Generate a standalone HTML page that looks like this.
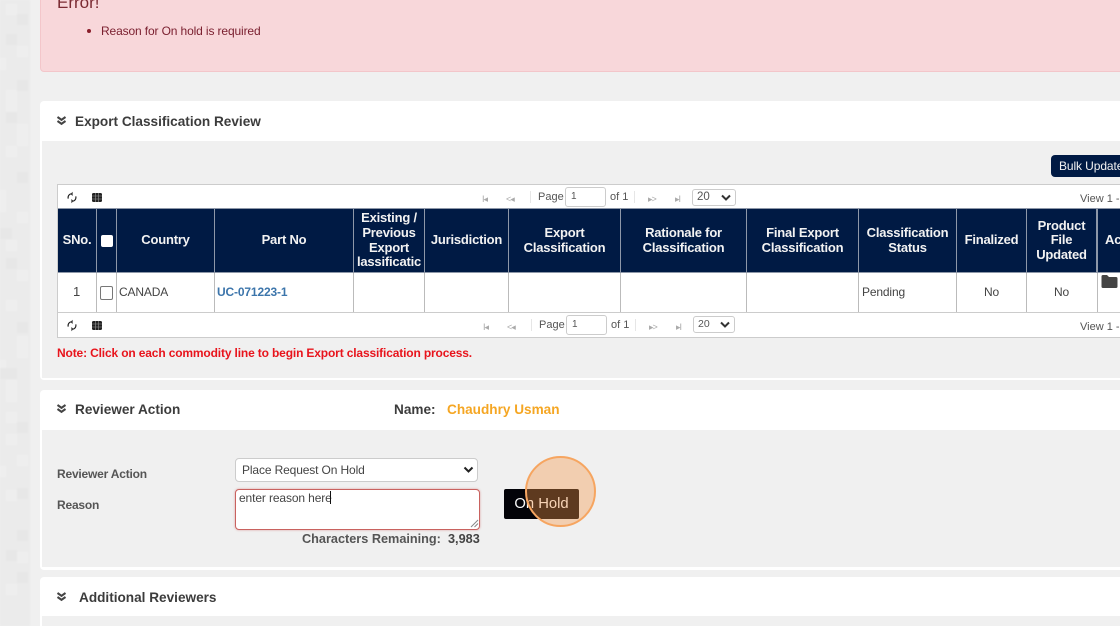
<!DOCTYPE html>
<html>
<head>
<meta charset="utf-8">
<style>
html,body{margin:0;padding:0;width:1120px;height:626px;overflow:hidden;}
#p{width:1120px;height:626px;overflow:hidden;position:relative;background:#f0f0f0;font-family:"Liberation Sans",sans-serif;color:#444;}
.a{position:absolute;white-space:nowrap;}
.box{position:absolute;box-sizing:border-box;}
.title{font-weight:bold;font-size:13.6px;color:#3c3c3c;line-height:16px;}
.th{position:absolute;top:209px;height:63px;display:flex;align-items:center;justify-content:center;text-align:center;color:#f2f2f2;font-weight:bold;font-size:13px;letter-spacing:-.2px;line-height:14.6px;overflow:hidden;box-sizing:border-box;background:#001a44;}
.vl{position:absolute;width:1px;}
.td{position:absolute;font-size:12px;letter-spacing:-.15px;line-height:14px;color:#444;white-space:nowrap;}
.pg{font-size:11px;color:#555;position:absolute;white-space:nowrap;line-height:13px;}
.inp{position:absolute;box-sizing:border-box;height:20px;background:#fff;border:1px solid #ccc;border-radius:3px;font-size:10px;color:#555;padding:3px 0 0 5px;line-height:12px;}
.sel{position:absolute;box-sizing:border-box;height:17px;background:#fff;border:1px solid #ccc;border-radius:3px;font-size:11.5px;color:#555;padding:1px 0 0 4px;line-height:13px;}
.lab{position:absolute;font-weight:bold;font-size:12px;letter-spacing:-.2px;color:#555;line-height:14px;white-space:nowrap;}
</style>
</head>
<body>
<div id="p">
<!-- left mosaic strip -->
<svg class="a" style="left:0;top:0;filter:blur(.8px)" width="30" height="626" xmlns="http://www.w3.org/2000/svg">
<rect x="-3" y="-3" width="33" height="632" fill="#ebebeb"/>
<g fill="#eeeeee"><rect x="6" y="4" width="11" height="11"/><rect x="17" y="46" width="11" height="11"/><rect x="0" y="58" width="6" height="12"/><rect x="6" y="90" width="11" height="22"/><rect x="17" y="124" width="11" height="22"/><rect x="6" y="146" width="11" height="11"/><rect x="0" y="190" width="6" height="22"/><rect x="17" y="212" width="11" height="11"/><rect x="6" y="240" width="11" height="11"/><rect x="17" y="270" width="11" height="11"/><rect x="6" y="300" width="11" height="11"/><rect x="17" y="336" width="11" height="22"/><rect x="0" y="360" width="6" height="8"/><rect x="6" y="380" width="11" height="22"/><rect x="6" y="412" width="11" height="11"/><rect x="6" y="434" width="11" height="11"/><rect x="17" y="455" width="11" height="11"/><rect x="0" y="466" width="6" height="11"/><rect x="6" y="490" width="11" height="11"/><rect x="17" y="552" width="11" height="11"/><rect x="6" y="584" width="11" height="11"/></g>
<g fill="#e7e7e7"><rect x="17" y="14" width="11" height="11"/><rect x="6" y="34" width="11" height="11"/><rect x="17" y="80" width="11" height="11"/><rect x="6" y="112" width="11" height="11"/><rect x="0" y="228" width="12" height="11"/><rect x="17" y="172" width="11" height="11"/><rect x="6" y="258" width="11" height="11"/><rect x="17" y="322" width="11" height="11"/><rect x="0" y="368" width="17" height="11"/><rect x="17" y="422" width="11" height="11"/><rect x="17" y="488" width="11" height="11"/><rect x="17" y="530" width="11" height="11"/><rect x="6" y="550" width="11" height="11"/><rect x="17" y="572" width="11" height="11"/></g>
</svg>

<!-- Alert -->
<div class="box" style="left:40px;top:-10px;width:1090px;height:82px;background:#f8d7da;border:1px solid #f3c6ca;border-radius:4px;"></div>
<div class="a" style="left:57px;top:-6px;font-size:17px;line-height:18px;color:#7b2b33;">Error!</div>
<div class="a" style="left:87px;top:29px;width:4px;height:4px;border-radius:50%;background:#8a1f2b;"></div>
<div class="a" style="left:101px;top:24px;font-size:12px;letter-spacing:-.13px;line-height:14px;color:#7b2030;">Reason for On hold is required</div>

<!-- Panel 1 -->
<div class="box" style="left:40px;top:101px;width:1090px;height:279px;background:#fff;border-radius:4px;"></div>
<div class="box" style="left:42px;top:141px;width:1080px;height:237px;background:#f0f0f0;"></div>
<svg class="a" style="left:56px;top:116px" width="11" height="10" viewBox="0 0 11 10"><path d="M1.5 1 5.5 3.8 9.5 1M1.5 5 5.5 7.8 9.5 5" fill="none" stroke="#444" stroke-width="2.1"/></svg>
<div class="a title" style="left:75px;top:114px;">Export Classification Review</div>
<div class="box" style="left:1051px;top:155px;width:90px;height:22px;background:#001a44;border-radius:4px;color:#f2f2f2;font-size:12px;letter-spacing:-.1px;line-height:22px;padding-left:8px;white-space:nowrap;">Bulk Update</div>

<!-- Grid -->
<div class="box" style="left:57px;top:184px;width:1080px;height:154px;background:#fff;border:1px solid #ccc;border-right:0;"></div>

<!-- top pager -->
<svg class="a" style="left:66px;top:191px" width="12" height="13" viewBox="0 0 12 13"><path d="M2.2 7.6A3.9 3.9 0 0 1 5 2.8M9.8 5.4A3.9 3.9 0 0 1 7 10.2" fill="none" stroke="#222" stroke-width="1.2"/><path d="M6.6 .8 4.6 3 6.6 5ZM5.4 12.2 7.4 10 5.4 8Z" fill="#222"/></svg>
<svg class="a" style="left:92px;top:193px" width="10" height="9" viewBox="0 0 10 9"><rect width="10" height="9" rx="1.5" fill="#222"/><path d="M0 3H10M0 6H10M3.3 0V9M6.6 0V9" stroke="#999" stroke-width=".6"/></svg>
<div class="pg" style="left:482px;top:193px;font-size:9px;color:#aaa;letter-spacing:-1px;">I◂</div>
<div class="pg" style="left:506px;top:193px;font-size:9px;color:#aaa;letter-spacing:-1px;">&lt;◂</div>
<div class="vl" style="left:530px;top:191px;height:12px;background:#e6e6e6;"></div>
<div class="pg" style="left:538px;top:191px;">Page</div>
<div class="inp" style="left:565px;top:187px;width:41px;">1</div>
<div class="pg" style="left:610px;top:191px;">of 1</div>
<div class="vl" style="left:634px;top:191px;height:12px;background:#e6e6e6;"></div>
<div class="pg" style="left:648px;top:193px;font-size:9px;color:#aaa;letter-spacing:-1px;">▸&gt;</div>
<div class="pg" style="left:675px;top:193px;font-size:9px;color:#aaa;letter-spacing:-1px;">▸I</div>
<div class="sel" style="left:692px;top:189px;width:44px;">20</div>
<svg class="a" style="left:721px;top:194px" width="10" height="8" viewBox="0 0 10 8"><path d="M1 1.5 5 5.5 9 1.5" fill="none" stroke="#333" stroke-width="2"/></svg>
<div class="pg" style="left:1080px;top:192.5px;">View 1 - 1 of 1</div>

<!-- header -->
<div class="box" style="left:58px;top:208px;width:1072px;height:65px;background:#8d97a8;"></div>
<div class="th" style="left:58px;width:38px;">SNo.</div>
<div class="th" style="left:97px;width:19px;"><span style="display:block;width:12px;height:12px;background:#fff;border-radius:2px;"></span></div>
<div class="th" style="left:117px;width:97px;">Country</div>
<div class="th" style="left:215px;width:138px;">Part No</div>
<div class="th" style="left:354px;width:70px;"><span style="display:block;width:70px;">Existing /<br>Previous<br>Export<br>lassificatic</span></div>
<div class="th" style="left:425px;width:83px;">Jurisdiction</div>
<div class="th" style="left:509px;width:111px;">Export<br>Classification</div>
<div class="th" style="left:621px;width:125px;">Rationale for<br>Classification</div>
<div class="th" style="left:747px;width:111px;">Final Export<br>Classification</div>
<div class="th" style="left:859px;width:97px;">Classification<br>Status</div>
<div class="th" style="left:957px;width:69px;">Finalized</div>
<div class="th" style="left:1027px;width:69px;">Product<br>File<br>Updated</div>
<div class="th" style="left:1098px;width:40px;display:block;padding:24px 0 0 7px;text-align:left;">Action</div>

<!-- row -->
<div class="vl" style="left:96px;top:273px;height:39px;background:#bbb;"></div>
<div class="vl" style="left:116px;top:273px;height:39px;background:#bbb;"></div>
<div class="vl" style="left:214px;top:273px;height:39px;background:#bbb;"></div>
<div class="vl" style="left:353px;top:273px;height:39px;background:#bbb;"></div>
<div class="vl" style="left:424px;top:273px;height:39px;background:#bbb;"></div>
<div class="vl" style="left:508px;top:273px;height:39px;background:#bbb;"></div>
<div class="vl" style="left:620px;top:273px;height:39px;background:#bbb;"></div>
<div class="vl" style="left:746px;top:273px;height:39px;background:#bbb;"></div>
<div class="vl" style="left:858px;top:273px;height:39px;background:#bbb;"></div>
<div class="vl" style="left:956px;top:273px;height:39px;background:#bbb;"></div>
<div class="vl" style="left:1026px;top:273px;height:39px;background:#bbb;"></div>
<div class="vl" style="left:1097px;top:273px;height:39px;background:#bbb;"></div>
<div class="box" style="left:58px;top:312px;width:1062px;height:1px;background:#ccc;"></div>
<div class="td" style="left:73px;top:285px;font-size:13px;">1</div>
<div class="box" style="left:100px;top:286px;width:13px;height:14px;background:#fff;border:1px solid #777;border-radius:2px;"></div>
<div class="td" style="left:119px;top:285px;">CANADA</div>
<div class="td" style="left:217px;top:285px;font-weight:bold;color:#3c75ab;">UC-071223-1</div>
<div class="td" style="left:862px;top:285px;">Pending</div>
<div class="td" style="left:984px;top:285px;">No</div>
<div class="td" style="left:1054px;top:285px;">No</div>
<svg class="a" style="left:1101px;top:274px" width="17" height="15" viewBox="0 0 17 15"><path d="M.5 2.5a1.5 1.5 0 0 1 1.5-1.5h4l2 2h7a1.5 1.5 0 0 1 1.5 1.5v8a1.5 1.5 0 0 1-1.5 1.5H2a1.5 1.5 0 0 1-1.5-1.5Z" fill="#444"/></svg>

<!-- bottom pager -->
<svg class="a" style="left:66px;top:319px" width="12" height="13" viewBox="0 0 12 13"><path d="M2.2 7.6A3.9 3.9 0 0 1 5 2.8M9.8 5.4A3.9 3.9 0 0 1 7 10.2" fill="none" stroke="#222" stroke-width="1.2"/><path d="M6.6 .8 4.6 3 6.6 5ZM5.4 12.2 7.4 10 5.4 8Z" fill="#222"/></svg>
<svg class="a" style="left:92px;top:321px" width="10" height="9" viewBox="0 0 10 9"><rect width="10" height="9" rx="1.5" fill="#222"/><path d="M0 3H10M0 6H10M3.3 0V9M6.6 0V9" stroke="#999" stroke-width=".6"/></svg>
<div class="pg" style="left:483px;top:321px;font-size:9px;color:#aaa;letter-spacing:-1px;">I◂</div>
<div class="pg" style="left:507px;top:321px;font-size:9px;color:#aaa;letter-spacing:-1px;">&lt;◂</div>
<div class="vl" style="left:531px;top:319px;height:12px;background:#e6e6e6;"></div>
<div class="pg" style="left:539px;top:319px;">Page</div>
<div class="inp" style="left:566px;top:315px;width:41px;">1</div>
<div class="pg" style="left:611px;top:319px;">of 1</div>
<div class="vl" style="left:635px;top:319px;height:12px;background:#e6e6e6;"></div>
<div class="pg" style="left:649px;top:321px;font-size:9px;color:#aaa;letter-spacing:-1px;">▸&gt;</div>
<div class="pg" style="left:676px;top:321px;font-size:9px;color:#aaa;letter-spacing:-1px;">▸I</div>
<div class="sel" style="left:693px;top:316px;width:42px;font-size:10.5px;">20</div>
<svg class="a" style="left:720px;top:321px" width="10" height="8" viewBox="0 0 10 8"><path d="M1 1.5 5 5.5 9 1.5" fill="none" stroke="#333" stroke-width="2"/></svg>
<div class="pg" style="left:1080px;top:320.5px;">View 1 - 1 of 1</div>

<div class="a" style="left:57px;top:346px;font-size:12px;letter-spacing:-.15px;line-height:14px;font-weight:bold;color:#e8141c;">Note: Click on each commodity line to begin Export classification process.</div>

<!-- Panel 2 -->
<div class="box" style="left:40px;top:390px;width:1090px;height:180px;background:#fff;border-radius:4px;"></div>
<div class="box" style="left:42px;top:430px;width:1080px;height:137px;background:#f0f0f0;"></div>
<svg class="a" style="left:56px;top:404px" width="11" height="10" viewBox="0 0 11 10"><path d="M1.5 1 5.5 3.8 9.5 1M1.5 5 5.5 7.8 9.5 5" fill="none" stroke="#444" stroke-width="2.1"/></svg>
<div class="a title" style="left:75px;top:402px;">Reviewer Action</div>
<div class="a title" style="left:394px;top:402px;">Name:</div>
<div class="a title" style="left:447px;top:402px;color:#f5a623;">Chaudhry Usman</div>

<div class="lab" style="left:57px;top:467px;">Reviewer Action</div>
<div class="lab" style="left:57px;top:498px;">Reason</div>
<div class="box" style="left:235px;top:458px;width:243px;height:24px;background:#fff;border:1px solid #ccc;border-radius:4px;font-size:12px;letter-spacing:-.13px;line-height:23px;padding-left:6px;color:#444;">Place Request On Hold</div>
<svg class="a" style="left:463px;top:466px" width="11" height="8" viewBox="0 0 11 8"><path d="M1.5 1.5 5.5 5.5 9.5 1.5" fill="none" stroke="#222" stroke-width="2"/></svg>
<div class="box" style="left:235px;top:489px;width:245px;height:41px;background:#fff;border:1px solid #c9625f;border-radius:4px;box-shadow:0 0 2px rgba(200,80,80,.5);font-size:12px;letter-spacing:-.12px;line-height:14px;padding:1px 0 0 3px;color:#444;">enter reason here</div>
<div class="box" style="left:330px;top:491px;width:1px;height:13px;background:#111;"></div>
<svg class="a" style="left:470px;top:519px" width="9" height="9" viewBox="0 0 9 9"><path d="M1 8 8 1M4.5 8 8 4.5" stroke="#888" stroke-width="1"/></svg>
<div class="a" style="left:302px;top:532px;font-size:12.7px;line-height:14px;font-weight:bold;color:#555;">Characters Remaining:</div>
<div class="a" style="left:448px;top:532px;font-size:12.7px;line-height:14px;color:#444;font-weight:bold;">3,983</div>

<div class="box" style="left:504px;top:489px;width:75px;height:30px;background:#030308;border-radius:2px;color:#fafafa;font-size:14.8px;line-height:31px;text-align:center;">On Hold</div>
<div class="box" style="left:525px;top:456px;width:71px;height:71px;border-radius:50%;background:rgba(245,150,70,.38);border:2.5px solid #f6a560;"></div>

<!-- Panel 3 -->
<div class="box" style="left:40px;top:577px;width:1090px;height:60px;background:#fff;border-radius:4px;"></div>
<div class="box" style="left:42px;top:616px;width:1080px;height:12px;background:#f0f0f0;"></div>
<svg class="a" style="left:56px;top:592px" width="11" height="10" viewBox="0 0 11 10"><path d="M1.5 1 5.5 3.8 9.5 1M1.5 5 5.5 7.8 9.5 5" fill="none" stroke="#444" stroke-width="2.1"/></svg>
<div class="a title" style="left:79px;top:590px;">Additional Reviewers</div>
</div>
</body>
</html>
